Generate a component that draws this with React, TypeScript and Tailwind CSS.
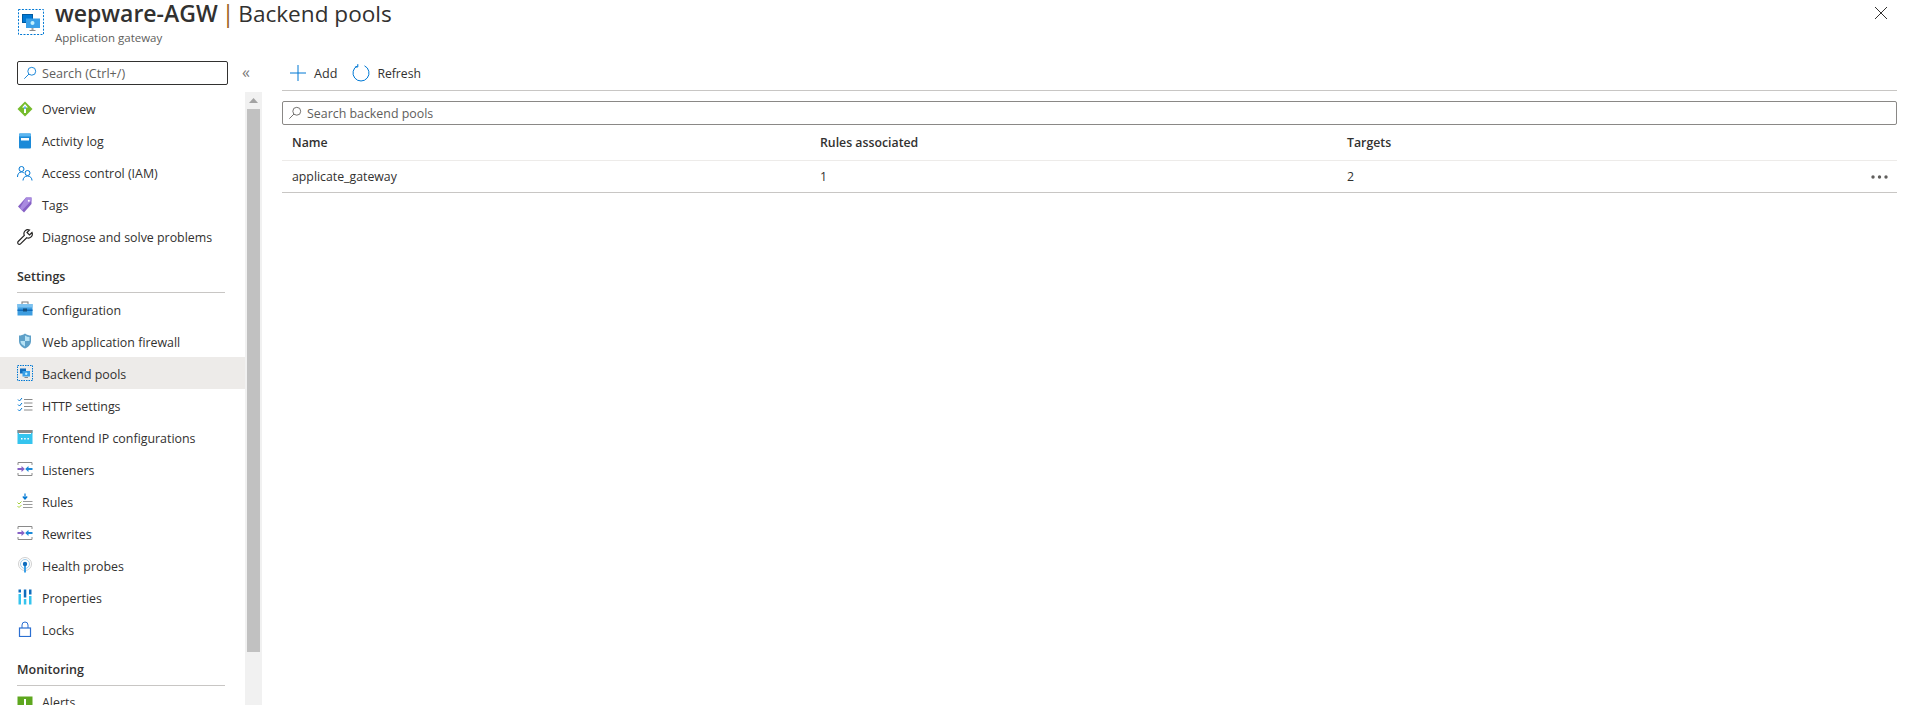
import { ReactNode } from "react";

const font = "font-['Open_Sans','Noto_Sans',sans-serif]";

function Search({ className }: { className?: string }) {
  return (
    <svg viewBox="0 0 16 16" className={className} fill="none" stroke="currentColor" strokeWidth="1">
      <circle cx="10" cy="6" r="4.5" />
      <path d="M6.8 9.2 1.5 14.5" />
    </svg>
  );
}

function GatewayIcon({ size }: { size: number }) {
  return (
    <svg viewBox="0 0 26 26" width={size} height={size}>
      <rect x="0.5" y="0.5" width="25" height="25" fill="none" stroke="#0078d4" strokeDasharray="2 1.4" />
      <rect x="4" y="5" width="11" height="9" fill="#005ba1" />
      <rect x="5" y="6" width="9" height="7" fill="#0078d4" />
      <rect x="8" y="9.5" width="14" height="9.5" fill="#3aa0e8" />
      <circle cx="14.5" cy="14" r="2" fill="#c3f1ff" />
      <rect x="13.5" y="19" width="2" height="2" fill="#a3a3a3" />
      <rect x="11.5" y="21" width="6" height="1" fill="#8a8a8a" />
    </svg>
  );
}

const Svg = ({ children, viewBox = "0 0 16 16" }: { children: ReactNode; viewBox?: string }) => (
  <svg viewBox={viewBox} width="16" height="16" className="shrink-0">
    {children}
  </svg>
);

const icons: Record<string, ReactNode> = {
  overview: (
    <Svg>
      <path d="M8 .5 15.5 8 8 15.5.5 8Z" fill="#76bc2d" />
      <path d="M8 3 11 6.5H9V12H7V6.5H5Z" fill="#fff" />
      <path d="M7.2 5.5h1.6V8H7.2Z" fill="#3aa0e8" />
    </Svg>
  ),
  log: (
    <Svg>
      <rect x="2" y="0.5" width="12" height="15" rx="1" fill="#1b8ad8" />
      <rect x="2" y="0.5" width="12" height="3" rx="1" fill="#5cb6f0" />
      <rect x="4" y="5" width="8" height="2.5" fill="#fff" />
    </Svg>
  ),
  iam: (
    <Svg>
      <g fill="none" stroke="#0078d4" strokeWidth="1">
        <circle cx="4.5" cy="4" r="2.5" />
        <path d="M.5 12c0-3 1.5-5 4-5 1 0 1.700.3 2.300.8" />
        <circle cx="10.500" cy="8" r="2.500" />
        <path d="M6 15.500c0-2.500 1.800-4.500 4.500-4.500s4.500 2 4.500 4.500" />
      </g>
    </Svg>
  ),
  tags: (
    <Svg>
      <path d="M9 .5h5.500v6.500L7 15.500 1 9.500Z" fill="#8661c5" />
      <path d="M9 .5h5.500v3L5 13.500 3 11Z" fill="#a98be0" />
      <circle cx="11.800" cy="3.800" r="1" fill="#fff" />
    </Svg>
  ),
  wrench: (
    <Svg>
      <path
        d="M15 3.500 12.500 6 10 3.500 12.500 1A4 4 0 0 0 7.300 6.300L1.200 12.500a1.600 1.600 0 0 0 2.300 2.300L9.700 8.700A4 4 0 0 0 15 3.500Z"
        fill="none"
        stroke="#252423"
        strokeWidth="1.200"
      />
    </Svg>
  ),
  config: (
    <Svg>
      <rect x="5" y="1" width="6" height="3" fill="none" stroke="#7a7a7a" />
      <rect x="0.500" y="3" width="15" height="11.500" fill="#3d9de0" />
      <rect x="0.500" y="3" width="15" height="3.500" fill="#7cc2f0" />
      <rect x="0.500" y="8.500" width="15" height="1.500" fill="#0f6cbd" />
      <rect x="6" y="7.500" width="4" height="3" fill="#14507f" />
    </Svg>
  ),
  shield: (
    <Svg>
      <path d="M8 .5C10 2 12 2.500 14 2.500V8c0 3.500-2.500 6-6 7.500C4.500 14 2 11.500 2 8V2.500C4 2.500 6 2 8 .5Z" fill="#5ea0c8" />
      <path d="M8 2.500c1.500 1 3 1.500 4.500 1.500v4H8Zm0 5.500v5.500C5.500 12 3.500 10.500 3.500 8Z" fill="#b6e2f5" />
    </Svg>
  ),
  pools: (
    <Svg>
      <rect x="0.500" y="0.500" width="15" height="15" fill="none" stroke="#0078d4" strokeDasharray="1.500 1" />
      <rect x="3" y="3.500" width="6" height="5" fill="#0f6cbd" />
      <rect x="5.500" y="6" width="7.500" height="5.500" fill="#3aa0e8" />
      <circle cx="9.200" cy="8.700" r="1.200" fill="#c3f1ff" />
      <rect x="7.500" y="12" width="3.500" height="1" fill="#8a8a8a" />
    </Svg>
  ),
  http: (
    <Svg>
      <path d="M1 2.500 2.500 4 5 1M1 7.500 2.500 9 5 6M1 12.500 2.500 14 5 11" fill="none" stroke="#0078d4" strokeWidth="1" />
      <path d="M7 2.500h8.500M7 6h8.500M7 9.500h8.500M7 13h8.500" stroke="#8a8a8a" strokeWidth="1" />
    </Svg>
  ),
  frontend: (
    <Svg>
      <rect x="0.500" y="1" width="15" height="14" fill="#35c4ee" />
      <rect x="0.500" y="1" width="15" height="3" fill="#8a8a8a" />
      <rect x="2" y="4" width="12" height="1" fill="#fff" />
      <path d="M4 9h1.500v1.500H4Zm3.200 0h1.500v1.500H7.200Zm3.200 0h1.500v1.500h-1.500Z" fill="#fff" />
    </Svg>
  ),
  listeners: (
    <Svg>
      <path d="M1 4V1.500h14V4M1 12v2.500h14V12" fill="none" stroke="#8a8a8a" strokeWidth="1" />
      <rect x="0.500" y="7" width="5" height="2" fill="#8661c5" />
      <path d="M4.500 5 7.800 8 4.500 11Z" fill="#8661c5" />
      <rect x="9" y="7" width="6.500" height="2" fill="#1b8ad8" />
      <path d="M11.500 5 8.200 8 11.500 11Z" fill="#1b8ad8" />
    </Svg>
  ),
  rules: (
    <Svg>
      <path d="M8 .5v5M5.800 3.500 8 6l2.200-2.500" fill="none" stroke="#0078d4" strokeWidth="1.200" />
      <path d="M6 8.500h9.500M6 11.500h9.500M6 14.500h9.500" stroke="#9a9a9a" strokeWidth="1" />
      <path d="M.5 9.500 2 11l2.500-2.500M.5 13 2 14.500 4.500 12" fill="none" stroke="#a4cf3a" strokeWidth="1" />
    </Svg>
  ),
  health: (
    <Svg>
      <circle cx="8" cy="7" r="6.500" fill="none" stroke="#d0d0d0" />
      <circle cx="8" cy="7" r="4.500" fill="none" stroke="#9fcbea" />
      <rect x="7" y="7" width="2" height="8.500" fill="#3aa0e8" />
      <circle cx="8" cy="7" r="2.200" fill="#0f6cbd" />
    </Svg>
  ),
  props: (
    <Svg>
      <rect x="1.500" y="5" width="2.500" height="10.500" fill="#35c4ee" />
      <rect x="1.500" y="0.500" width="2.500" height="3" fill="#0f6cbd" />
      <rect x="6.800" y="0.500" width="2.500" height="8" fill="#0f6cbd" />
      <rect x="6.800" y="10" width="2.500" height="5.500" fill="#35c4ee" />
      <rect x="12" y="0.500" width="2.500" height="5" fill="#0f6cbd" />
      <rect x="12" y="7" width="2.500" height="8.500" fill="#35c4ee" />
    </Svg>
  ),
  lock: (
    <Svg>
      <path d="M5 7V4a3 3 0 0 1 6 0v3" fill="none" stroke="#2b6fd1" strokeWidth="1" />
      <rect x="2.500" y="7" width="11" height="8.500" fill="none" stroke="#2b6fd1" strokeWidth="1.200" />
    </Svg>
  ),
  alerts: (
    <Svg viewBox="0 -2 16 16">
      <rect x="0.500" y="0.500" width="15" height="15" fill="#5ea71f" />
      <path d="M7 3h2v7H7Zm0 8.500h2v2H7Z" fill="#fff" />
    </Svg>
  ),
};

function NavItem({ icon, label, active, low }: { icon: string; label: string; active?: boolean; low?: boolean }) {
  return (
    <div className={`flex h-8 items-center gap-[9px] pl-[17px] ${active ? "bg-[#edebe9]" : ""}`}>
      {icons[icon]}
      <span className={`text-[12.4px] leading-none whitespace-nowrap text-[#323130] ${low ? "mt-[4px]" : "mt-[2px]"}`}>
        {label}
      </span>
    </div>
  );
}

function NavHeading({ label, tall }: { label: string; tall?: boolean }) {
  return (
    <div
      className={`mr-[20px] ml-[17px] flex items-end border-b border-[#c8c6c4] pb-[6px] ${tall ? "h-[41px]" : "h-10"}`}
    >
      <span className="text-[12.5px] leading-[18px] font-semibold text-[#323130]">{label}</span>
    </div>
  );
}

export default function App() {
  return (
    <div className={`${font} flex h-[705px] flex-col overflow-hidden bg-white text-[#323130]`}>
      <header className="flex h-[61px] shrink-0">
        <div className="mt-[9px] ml-[18px]">
          <GatewayIcon size={26} />
        </div>
        <div className="ml-[11px]">
          <h1 className="h-[29px] text-[23px] leading-[26px] whitespace-nowrap text-[#323130]">
            <span className="font-semibold">wepware-AGW</span>
            <span className="mx-[4px] text-[#9a5b14]">|</span>
            <span className="text-[22.6px]">Backend pools</span>
          </h1>
          <div className="mt-[1px] text-[11.5px] leading-[16px] text-[#605e5c]">Application gateway</div>
        </div>
        <svg viewBox="0 0 12 12" className="mt-[7px] mr-[18px] ml-auto h-3 w-3" stroke="#323130" strokeWidth="1">
          <path d="M0 0l12 12M12 0 0 12" />
        </svg>
      </header>

      <div className="flex min-h-0 flex-1">
        <aside className="flex w-[262px] shrink-0 flex-col">
          <div className="flex h-[31px] shrink-0 items-start">
            <div className="ml-[17px] flex h-[24px] w-[211px] items-center rounded-[2px] border border-[#323130] pl-[5px]">
              <Search className="h-[14px] w-[14px] text-[#0078d4]" />
              <span className="mt-[2px] ml-[5px] text-[12.6px] leading-none text-[#605e5c]">Search (Ctrl+/)</span>
            </div>
            <span className="mt-[1px] ml-[14px] text-[16px] leading-[20px] text-[#7a7a7a]">«</span>
          </div>
          <div className="flex min-h-0 flex-1">
            <nav className="w-[245px] shrink-0 overflow-hidden pt-[1px]">
              <NavItem icon="overview" label="Overview" />
              <NavItem icon="log" label="Activity log" />
              <NavItem icon="iam" label="Access control (IAM)" />
              <NavItem icon="tags" label="Tags" />
              <NavItem icon="wrench" label="Diagnose and solve problems" />
              <NavHeading label="Settings" />
              <NavItem low icon="config" label="Configuration" />
              <NavItem low icon="shield" label="Web application firewall" />
              <NavItem low icon="pools" label="Backend pools" active />
              <NavItem low icon="http" label="HTTP settings" />
              <NavItem low icon="frontend" label="Frontend IP configurations" />
              <NavItem low icon="listeners" label="Listeners" />
              <NavItem low icon="rules" label="Rules" />
              <NavItem low icon="listeners" label="Rewrites" />
              <NavItem low icon="health" label="Health probes" />
              <NavItem low icon="props" label="Properties" />
              <NavItem low icon="lock" label="Locks" />
              <NavHeading tall label="Monitoring" />
              <NavItem icon="alerts" label="Alerts" />
            </nav>
            <div className="flex w-[17px] shrink-0 flex-col items-center bg-[#f1f1f1]">
              <svg viewBox="0 0 9 5" className="mt-[6px] h-[5px] w-[9px]" fill="#a3a3a3">
                <path d="M4.500 0 9 5H0Z" />
              </svg>
              <div className="mt-[6px] h-[543px] w-[13px] bg-[#c1c1c1]" />
            </div>
          </div>
        </aside>

        <main className="min-w-0 flex-1 pr-2 pl-5">
          <div className="flex h-[30px] items-start border-b border-[#c8c6c4] pl-[8px]">
            <svg viewBox="0 0 16 16" className="mt-[4px] h-4 w-4" stroke="#0078d4" strokeWidth="1">
              <path d="M8 0v16M0 8h16" />
            </svg>
            <span className="mt-[4px] ml-[8px] text-[12.6px] leading-[18px]">Add</span>
            <svg viewBox="0 0 18 18" className="mt-[3px] ml-[15px] h-[18px] w-[18px]" fill="none" stroke="#0078d4" strokeWidth="1">
              <path d="M5.500 1.800A8 8 0 1 0 12.500 1.800M5.800 .1 5.800 3 2.900 3" />
            </svg>
            <span className="mt-[4px] ml-[7px] text-[12.2px] leading-[18px]">Refresh</span>
          </div>
          <div className="mt-[10px] flex h-[24px] items-center rounded-[2px] border border-[#8a8886] pl-[5px]">
            <Search className="h-[14px] w-[14px] text-[#605e5c]" />
            <span className="mt-[2px] ml-[5px] text-[12.4px] leading-none text-[#605e5c]">Search backend pools</span>
          </div>
          <div className="grid h-[36px] grid-cols-[528px_527px_1fr] items-center border-b border-[#edebe9] pt-[2px] pl-[10px] text-[12.3px] font-semibold">
            <span>Name</span>
            <span>Rules associated</span>
            <span>Targets</span>
          </div>
          <div className="grid h-[32px] grid-cols-[528px_527px_1fr_26px] items-center border-b border-[#c8c6c4] pt-[2px] pl-[10px] text-[12.3px]">
            <span>applicate_gateway</span>
            <span>1</span>
            <span>2</span>
            <svg viewBox="0 0 17 4" className="-mt-[2px] h-[4px] w-[17px]" fill="#605e5c">
              <circle cx="2" cy="2" r="1.700" />
              <circle cx="8.500" cy="2" r="1.700" />
              <circle cx="15" cy="2" r="1.700" />
            </svg>
          </div>
        </main>
      </div>
    </div>
  );
}
